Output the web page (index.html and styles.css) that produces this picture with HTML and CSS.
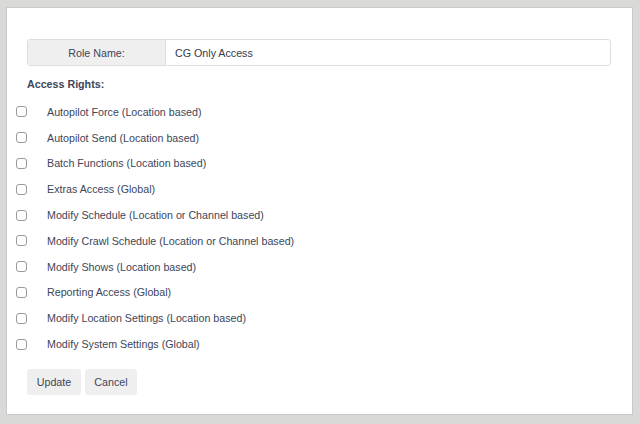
FILE: index.html
```html
<!DOCTYPE html>
<html>
<head>
<meta charset="utf-8">
<link rel="stylesheet" href="styles.css">
</head>
<body>
<div class="panel">
  <div class="role-row">
    <div class="role-label">Role Name:</div>
    <div class="role-value">CG Only Access</div>
  </div>
  <div class="rights-title">Access Rights:</div>
  <ul class="rights">
    <li><span class="cb"></span><span class="lbl">Autopilot Force (Location based)</span></li>
    <li><span class="cb"></span><span class="lbl">Autopilot Send (Location based)</span></li>
    <li><span class="cb"></span><span class="lbl">Batch Functions (Location based)</span></li>
    <li><span class="cb"></span><span class="lbl">Extras Access (Global)</span></li>
    <li><span class="cb"></span><span class="lbl">Modify Schedule (Location or Channel based)</span></li>
    <li><span class="cb"></span><span class="lbl">Modify Crawl Schedule (Location or Channel based)</span></li>
    <li><span class="cb"></span><span class="lbl">Modify Shows (Location based)</span></li>
    <li><span class="cb"></span><span class="lbl">Reporting Access (Global)</span></li>
    <li><span class="cb"></span><span class="lbl">Modify Location Settings (Location based)</span></li>
    <li><span class="cb"></span><span class="lbl">Modify System Settings (Global)</span></li>
  </ul>
  <div class="actions">
    <button class="btn btn-update">Update</button>
    <button class="btn btn-cancel">Cancel</button>
  </div>
</div>
</body>
</html>
```
FILE: styles.css
```css
* { box-sizing: border-box; }
html, body { margin: 0; padding: 0; }
body {
  background: #d9d9d7;
  font-family: "Liberation Sans", Arial, sans-serif;
  font-size: 10.7px;
  color: #3d4559;
  padding: 7px 6px 0 6px;
  width: 640px;
  height: 424px;
}
.panel {
  width: 627px;
  height: 408px;
  background: #fff;
  border: 1px solid #c9c9c9;
  padding: 31px 21px 0 9px;
}
.role-row {
  display: flex;
  margin-left: 11px;
  height: 27px;
  border: 1px solid #dedede;
  border-radius: 3px;
}
.role-label {
  width: 138px;
  background: #efefef;
  border-right: 1px solid #dedede;
  display: flex;
  align-items: center;
  justify-content: center;
  border-radius: 3px 0 0 3px;
}
.role-value {
  flex: 1;
  display: flex;
  align-items: center;
  padding-left: 9px;
  color: #333a4a;
}
.rights-title {
  margin: 11px 0 0 11px;
  font-weight: bold;
  height: 14px;
  line-height: 14px;
}
.rights {
  list-style: none;
  margin: 8px 0 0 0;
  padding: 0;
}
.rights li {
  display: flex;
  align-items: center;
  height: 25.8px;
}
.cb {
  width: 11px;
  height: 11px;
  border: 1px solid #9a9a9a;
  border-radius: 3px;
  background: #fff;
  flex: none;
}
.lbl {
  margin-left: 20px;
}
.actions {
  display: flex;
  gap: 4px;
  margin: 12px 0 0 11px;
}
.btn {
  font-family: "Liberation Sans", Arial, sans-serif;
  font-size: 10.7px;
  color: #3d4559;
  background: #efefef;
  border: none;
  border-radius: 3px;
  height: 26px;
  padding: 0;
}
.btn-update { width: 54px; }
.btn-cancel { width: 52px; }
```
